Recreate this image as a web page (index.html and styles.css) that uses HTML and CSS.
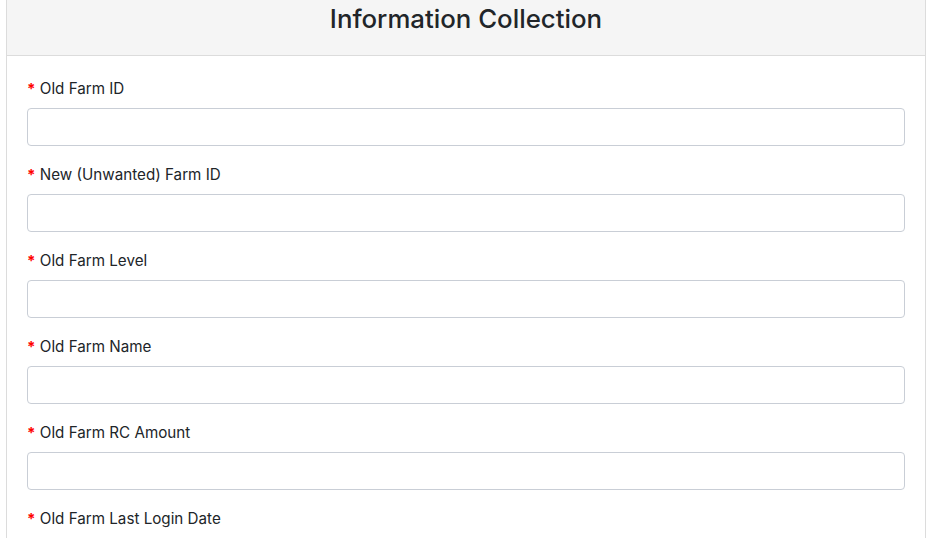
FILE: index.html
```html
<!DOCTYPE html>
<html lang="en">
<head>
<meta charset="utf-8">
<title>Information Collection</title>
<link rel="stylesheet" href="styles.css">
</head>
<body>
<div class="card">
  <div class="card-header"><h1 class="title">Information Collection</h1></div>
  <form class="card-body">
    <div class="field"><label class="label"><span class="req">*</span> Old Farm ID</label><input class="input" type="text"></div>
    <div class="field"><label class="label"><span class="req">*</span> New (Unwanted) Farm ID</label><input class="input" type="text"></div>
    <div class="field"><label class="label"><span class="req">*</span> Old Farm Level</label><input class="input" type="text"></div>
    <div class="field"><label class="label"><span class="req">*</span> Old Farm Name</label><input class="input" type="text"></div>
    <div class="field"><label class="label"><span class="req">*</span> Old Farm RC Amount</label><input class="input" type="text"></div>
    <div class="field"><label class="label"><span class="req">*</span> Old Farm Last Login Date</label><input class="input" type="text"></div>
  </form>
</div>
</body>
</html>
```
FILE: styles.css
```css
html, body { margin: 0; padding: 0; background: #fff; }
body { font-family: "Inter", "Liberation Sans", sans-serif; color: #212529; }
.card {
  margin: 0 6px;
  border-left: 1px solid #dcdcdc;
  border-right: 1px solid #dcdcdc;
  min-height: 600px;
}
.card-header {
  box-sizing: border-box;
  height: 56px;
  padding-top: 1px;
  background: #f5f5f5;
  border-bottom: 1px solid #dcdcdc;
  text-align: center;
}
.title {
  margin: 0;
  font-size: 25.8px;
  line-height: 36px;
  font-weight: 500;
  color: #212529;
}
.card-body { padding: 20px 20px 0; display: flex; flex-direction: column; gap: 16px; }
.field { display: flex; flex-direction: column; gap: 7px; }
.label { font-size: 15.2px; line-height: 24px; padding-top: 1px; color: #212529; }
.req { color: #ff0000; font-weight: 700; }
.input {
  box-sizing: border-box;
  height: 38px;
  width: 100%;
  margin: 0;
  border: 1px solid #c9ced6;
  border-radius: 4px;
  background: #fff;
}
```
